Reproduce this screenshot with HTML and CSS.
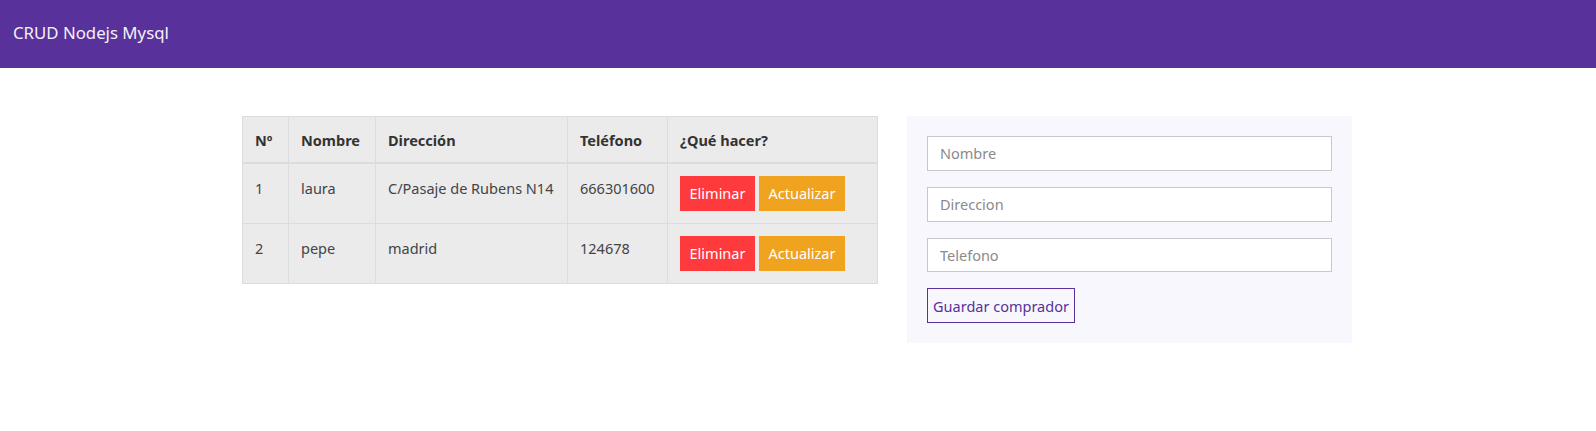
FILE: index.html
```html
<!DOCTYPE html>
<html lang="es">
<head>
<meta charset="utf-8">
<title>CRUD Nodejs Mysql</title>
<link rel="stylesheet" href="styles.css">
</head>
<body>
<nav class="navbar">
  <span class="brand">CRUD Nodejs Mysql</span>
</nav>
<main class="container">
  <div class="col-table">
    <table class="table">
      <thead>
        <tr>
          <th class="c-n">Nº</th>
          <th class="c-nombre">Nombre</th>
          <th class="c-dir">Dirección</th>
          <th class="c-tel">Teléfono</th>
          <th class="c-acc">¿Qué hacer?</th>
        </tr>
      </thead>
      <tbody>
        <tr>
          <td>1</td>
          <td>laura</td>
          <td>C/Pasaje de Rubens N14</td>
          <td>666301600</td>
          <td class="actions"><a class="btn btn-danger">Eliminar</a><a class="btn btn-warning">Actualizar</a></td>
        </tr>
        <tr>
          <td>2</td>
          <td>pepe</td>
          <td>madrid</td>
          <td>124678</td>
          <td class="actions"><a class="btn btn-danger">Eliminar</a><a class="btn btn-warning">Actualizar</a></td>
        </tr>
      </tbody>
    </table>
  </div>
  <div class="col-form">
    <form class="card">
      <input class="form-control" type="text" placeholder="Nombre">
      <input class="form-control" type="text" placeholder="Direccion">
      <input class="form-control" type="text" placeholder="Telefono">
      <button class="btn-outline" type="button">Guardar comprador</button>
    </form>
  </div>
</main>
</body>
</html>
```
FILE: styles.css
```css
* { box-sizing: border-box; }
html, body { margin: 0; }
body {
  font-family: "Noto Sans", "Open Sans", sans-serif;
  font-size: 14.5px;
  line-height: 24px;
  color: #3a3a3a;
  background: #fff;
}
.navbar {
  height: 68px;
  background: #58319a;
  display: flex;
  align-items: center;
  padding-left: 13px;
}
.brand {
  color: #f4f0fa;
  font-size: 16.8px;
  line-height: 24px;
  position: relative;
  top: -1px;
}
.container {
  width: 1140px;
  margin: 48px auto 0;
  display: grid;
  grid-template-columns: 665px 475px;
}
.col-table { padding: 0 15px 0 14px; }
.col-form { padding: 0 16px 0 14px; }
.table {
  width: 636px;
  table-layout: fixed;
  border-collapse: collapse;
  background: #ebebeb;
}
.table th, .table td {
  border: 1px solid #dcdcdc;
  padding: 11px 12px 10px;
  text-align: left;
  vertical-align: top;
  white-space: nowrap;
}
.table th {
  font-weight: 700;
  color: #333;
  border-bottom-width: 2px;
  height: 45px;
}
.table td { height: 60px; color: #444; padding-top: 12px; }
.c-n { width: 46px; }
.c-nombre { width: 87px; }
.c-dir { width: 192px; }
.c-tel { width: 100px; }
.btn {
  display: inline-block;
  height: 35px;
  line-height: 35px;
  color: #fff;
  font-size: 14.5px;
  text-align: center;
  vertical-align: top;
}
.btn-danger { background: #ff3a3d; width: 75px; margin-right: 4px; }
.btn-warning { background: #f0a31e; width: 86px; }
.card {
  background: #f8f7fd;
  padding: 20px;
  height: 227px;
  display: flex;
  flex-direction: column;
  align-items: flex-start;
}
.form-control {
  width: 100%;
  height: 35px;
  border: 1px solid #c8c8cc;
  background: #fff;
  padding: 0 12px;
  font-family: inherit;
  font-size: 14.5px;
  color: #444;
  margin-bottom: 16px;
  outline: none;
}
.form-control::placeholder { color: #8a8a8e; }
.btn-outline {
  height: 35px;
  width: 148px;
  border: 1px solid #58319a;
  background: transparent;
  color: #58319a;
  font-family: inherit;
  font-size: 14.5px;
  padding: 0;
}
```
